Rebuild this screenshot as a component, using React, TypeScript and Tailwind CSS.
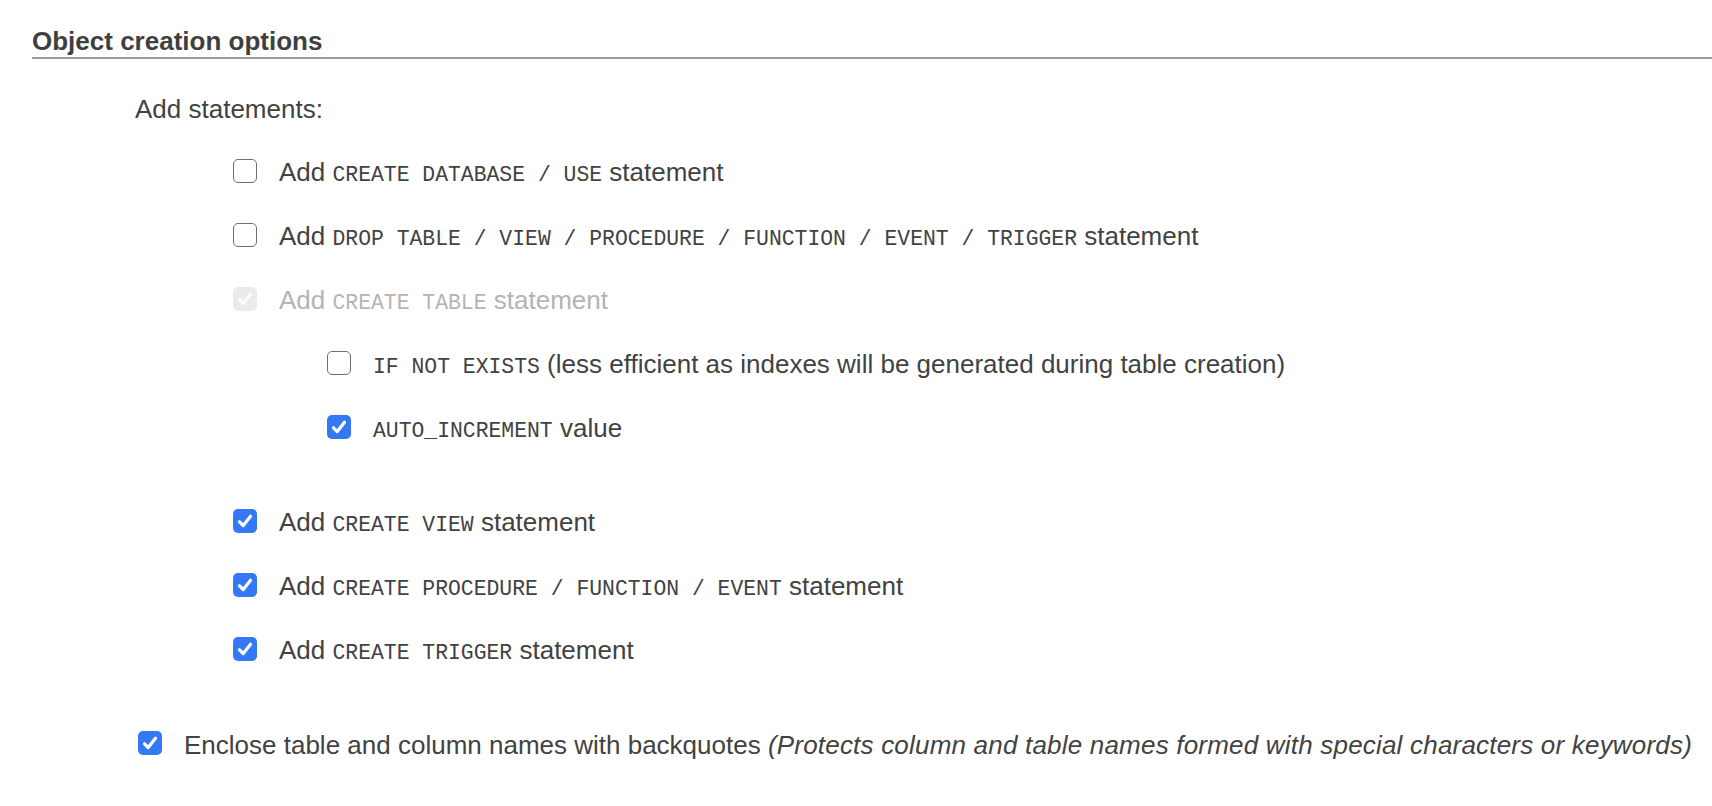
import React from "react";

type Part = string | { code: string } | { em: string };

const Box = ({ state }: { state: "off" | "on" | "disabled" }) => {
  if (state === "off") {
    return <span className="block w-6 h-6 shrink-0 rounded-[5px] border-[1.5px] border-[#6e6e6e] bg-white" />;
  }
  const bg = state === "on" ? "bg-[#3478f6]" : "bg-[#ebebeb]";
  const stroke = state === "on" ? "#ffffff" : "#fbfbfb";
  return (
    <span className={`flex items-center justify-center w-6 h-6 shrink-0 rounded-[5px] ${bg}`}>
      <svg width="24" height="24" viewBox="0 0 24 24" fill="none">
        <path d="M6.5 12.8 L10.2 16.6 L17.5 7.2" stroke={stroke} strokeWidth="3.2" strokeLinecap="round" strokeLinejoin="round" />
      </svg>
    </span>
  );
};

const Option = ({ state, parts }: { state: "off" | "on" | "disabled"; parts: Part[] }) => (
  <div className="flex items-center h-[64px]">
    <Box state={state} />
    <span
      className={`ml-[22px] pt-[4px] leading-[30px] text-[26px] whitespace-nowrap ${state === "disabled" ? "text-[#b4b4b4]" : "text-[#424242]"}`}
    >
      {parts.map((p, i) =>
        typeof p === "string" ? (
          <React.Fragment key={i}>{p}</React.Fragment>
        ) : "code" in p ? (
          <code key={i} className="text-[21.4px] [font-family:'Liberation_Mono','Courier_New',monospace]">
            {p.code}
          </code>
        ) : (
          <em key={i} className="italic tracking-[0.2px]">
            {p.em}
          </em>
        )
      )}
    </span>
  </div>
);

export default function App() {
  return (
    <div className="w-full min-h-[806px] bg-white text-[#424242] [font-family:'Liberation_Sans',Helvetica,Arial,sans-serif] pt-[26px]">
      {/* Section header */}
      <div className="ml-[32px] border-b-2 border-[#9a9a9a]">
        <h2 className="text-[26px] leading-[31px] font-bold text-[#3f3f3f]">Object creation options</h2>
      </div>

      <p className="mt-[35px] ml-[135px] text-[26px] leading-[30px]">Add statements:</p>

      <div className="mt-[15px]">
        <div className="ml-[233px]">
          <Option state="off" parts={["Add ", { code: "CREATE DATABASE / USE" }, " statement"]} />
          <Option
            state="off"
            parts={["Add ", { code: "DROP TABLE / VIEW / PROCEDURE / FUNCTION / EVENT / TRIGGER" }, " statement"]}
          />
          <Option state="disabled" parts={["Add ", { code: "CREATE TABLE" }, " statement"]} />
          <div className="ml-[94px]">
            <Option
              state="off"
              parts={[{ code: "IF NOT EXISTS" }, " (less efficient as indexes will be generated during table creation)"]}
            />
            <Option state="on" parts={[{ code: "AUTO_INCREMENT" }, " value"]} />
          </div>
        </div>

        <div className="ml-[233px] mt-[30px]">
          <Option state="on" parts={["Add ", { code: "CREATE VIEW" }, " statement"]} />
          <Option state="on" parts={["Add ", { code: "CREATE PROCEDURE / FUNCTION / EVENT" }, " statement"]} />
          <Option state="on" parts={["Add ", { code: "CREATE TRIGGER" }, " statement"]} />
        </div>

        <div className="ml-[138px] mt-[30px]">
          <Option
            state="on"
            parts={[
              "Enclose table and column names with backquotes ",
              { em: "(Protects column and table names formed with special characters or keywords)" },
            ]}
          />
        </div>
      </div>
    </div>
  );
}
